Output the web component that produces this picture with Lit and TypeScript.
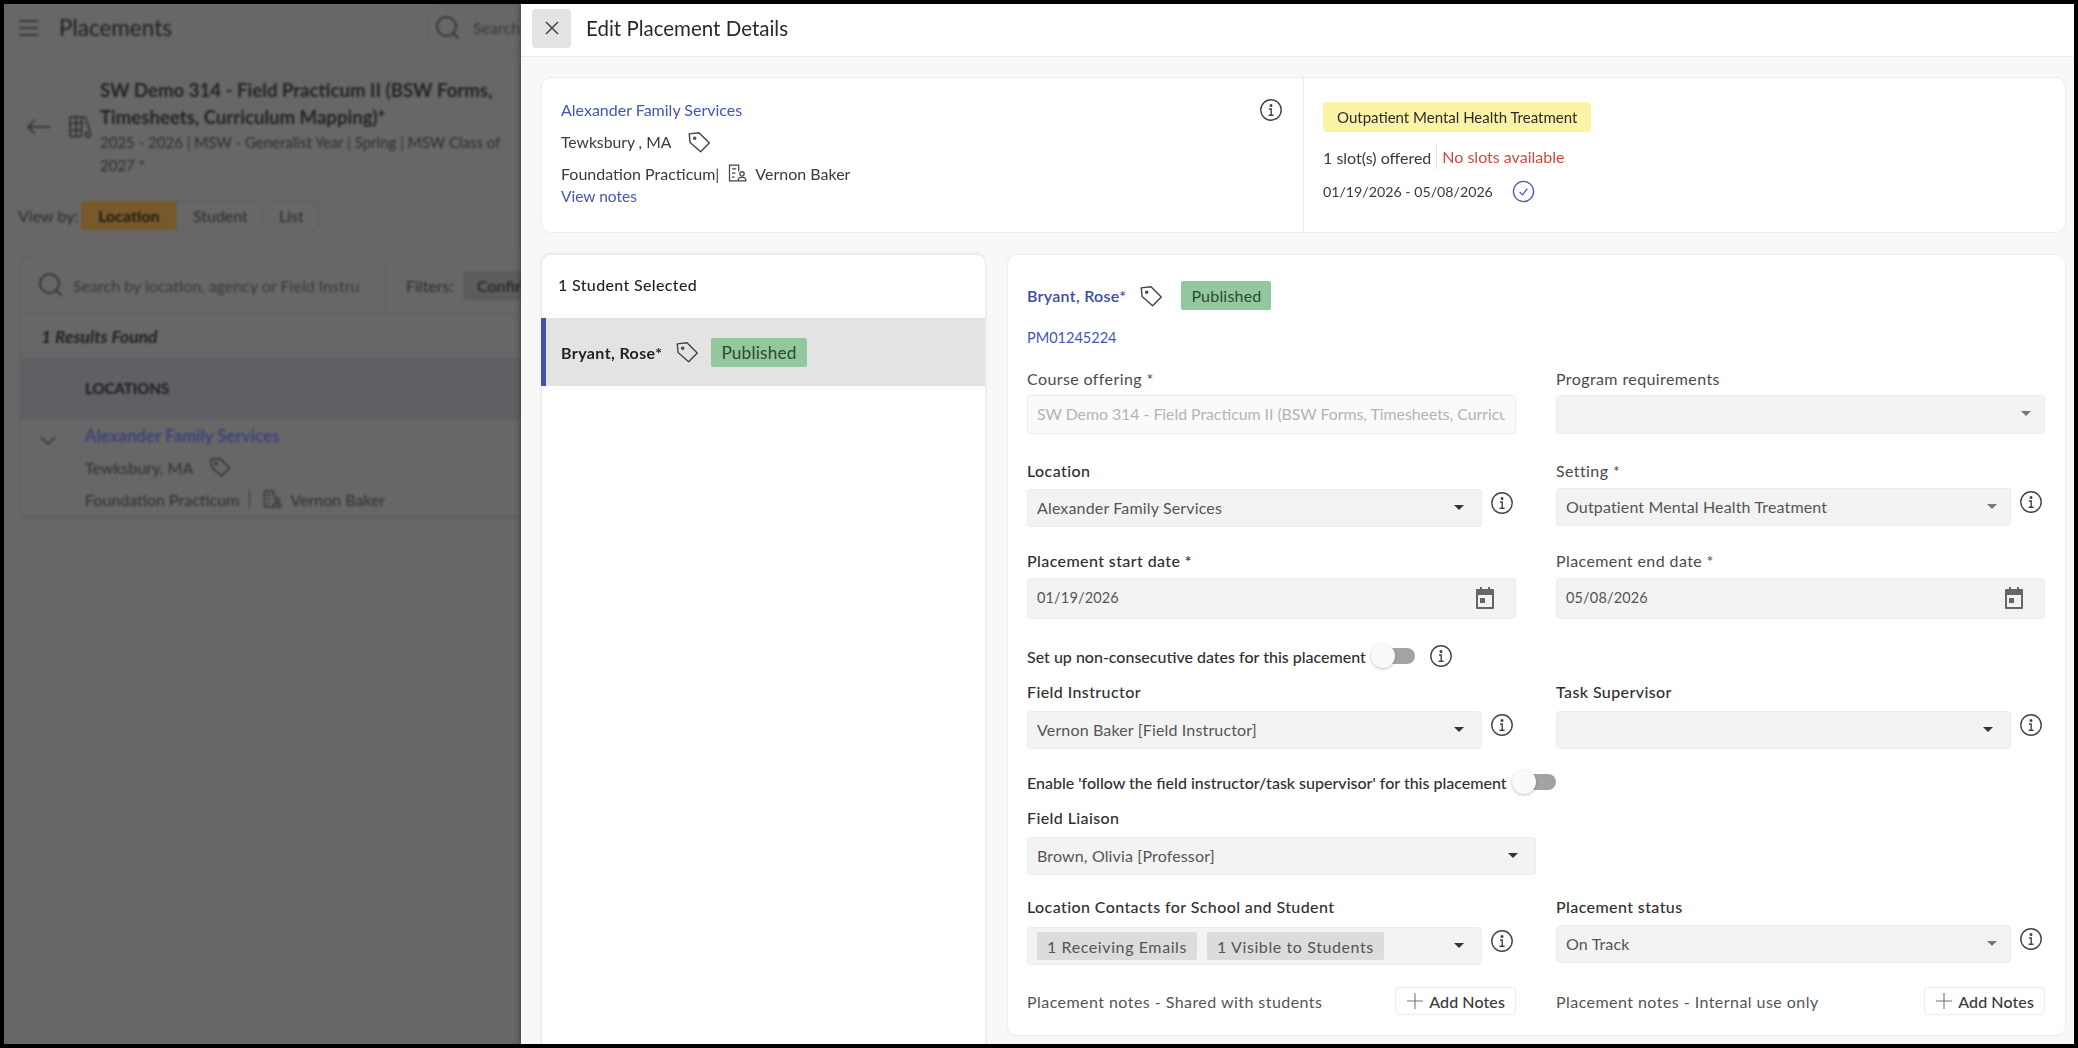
import { LitElement, html, css } from 'lit'
import { customElement } from 'lit/decorators.js'

const tagIcon = (size = 26, color = '#444') => html`
  <svg class="ico" width=${size} height=${size} viewBox="0 0 24 24" fill="none" stroke=${color} stroke-width="1.3" stroke-linejoin="round">
    <path d="M3 4.5 12 3.5 21.5 13 13.5 21 3.8 12.5z" />
    <circle cx="8" cy="8.5" r="1" />
  </svg>
`

const infoIcon = (size = 24, color = '#444') => html`
  <svg class="ico" width=${size} height=${size} viewBox="0 0 24 24" fill="none" stroke=${color} stroke-width="1.4">
    <circle cx="12" cy="12" r="10.2" />
    <path d="M10 11h2.2v6M9.6 17.2h5" />
    <circle cx="12" cy="7.4" r=".8" fill=${color} />
  </svg>
`

const supervisorIcon = (color = '#444') => html`
  <svg class="ico" width="20" height="20" viewBox="0 0 24 24" fill="none" stroke=${color} stroke-width="1.5">
    <path d="M14 10V2.5H3v19h10M6 7h5M6 12h4M6 17h3" />
    <circle cx="18" cy="13" r="2.6" />
    <path d="M13.5 21.5v-1.8a3 3 0 0 1 3-2.4h3a3 3 0 0 1 3 2.4v1.8z" />
  </svg>
`

const bookIcon = () => html`
  <svg class="ico" width="24" height="24" viewBox="0 0 24 24" fill="none" stroke="#2e2e2e" stroke-width="1.5">
    <path d="M1.5 2h16M1.5 8h14M1.5 15h12M1.5 21.5h12M2 2v19.5M8 2v19.5M13.5 2v19.5M17 2l5 14" />
    <circle cx="20" cy="19.5" r="2.5" />
  </svg>
`

const searchIcon = () => html`
  <svg class="ico" width="26" height="26" viewBox="0 0 26 26" fill="none" stroke="#2c2c2c" stroke-width="1.6">
    <circle cx="11.5" cy="11.5" r="9.5" />
    <path d="m18.5 18.5 5 5" />
  </svg>
`

const calendarIcon = () => html`
  <svg class="ico" width="24" height="24" viewBox="0 0 24 24" fill="#666">
    <path d="M7 1h2v2h6V1h2v2h3a1 1 0 0 1 1 1v18a1 1 0 0 1-1 1H4a1 1 0 0 1-1-1V4a1 1 0 0 1 1-1h3zM5 9v12h14V9z" />
    <rect x="7" y="12" width="5" height="5" />
  </svg>
`

const plusIcon = () => html`
  <svg class="ico" width="16" height="16" viewBox="0 0 16 16" stroke="#777" stroke-width="1.1">
    <path d="M8 0v16M0 8h16" />
  </svg>
`

const arrow = (cls = '') => html`<span class="arrow ${cls}"></span>`

const toggle = () => html`<span class="toggle"><span class="knob"></span></span>`

@customElement('app-root')
export class AppRoot extends LitElement {
  static styles = css`
    :host {
      display: block;
      width: 2078px;
      height: 1048px;
      padding: 4px;
      box-sizing: border-box;
      background: #000;
      font-family: Lato, "Noto Sans", sans-serif;
      font-size: 16px;
      color: #333;
    }

    * {
      box-sizing: border-box;
    }

    .ico {
      display: block;
      flex: none;
    }

    .screen {
      position: relative;
      height: 1040px;
      overflow: hidden;
      background: #676767;
    }

    /* page behind the drawer */
    .page {
      height: 100%;
      filter: blur(0.8px);
      color: #2c2c2c;
    }

    .topbar {
      display: flex;
      align-items: center;
      height: 53px;
      padding: 0 0 5px 15px;
      border-bottom: 1px solid #5f5f5f;
    }

    .burger {
      width: 19px;
      height: 16px;
      border-top: 2px solid #3a3a3a;
      border-bottom: 2px solid #3a3a3a;
      margin-right: 21px;
    }

    .burger::after {
      content: "";
      display: block;
      margin-top: 5px;
      height: 2px;
      background: #3a3a3a;
    }

    .page-title {
      width: 368px;
      font-size: 22.5px;
      color: #1f1f1f;
    }

    .top-search {
      display: flex;
      align-items: center;
      gap: 12px;
      width: 240px;
      height: 46px;
      padding-left: 7px;
      border: 1px solid #5f5f5f;
      border-radius: 12px;
      color: #3a3a3a;
    }

    .course {
      display: flex;
      align-items: center;
      margin-top: 20px;
      padding-left: 23px;
    }

    .back {
      margin-right: 18px;
    }

    .course-text {
      margin-left: 8px;
    }

    .course-title {
      font-size: 18.6px;
      line-height: 27px;
      font-weight: 700;
      color: #232323;
      white-space: nowrap;
    }

    .course-sub {
      font-size: 15px;
      line-height: 23px;
      color: #2e2e2e;
      white-space: nowrap;
    }

    .view-by {
      display: flex;
      align-items: center;
      margin-top: 24px;
      padding-left: 14px;
      gap: 2px;
    }

    .seg {
      display: flex;
      height: 29px;
      margin-left: 1px;
      border: 1px solid #606060;
      border-radius: 3px;
    }

    .seg span {
      display: flex;
      align-items: center;
      justify-content: center;
      width: 87px;
      border-left: 1px solid #606060;
    }

    .seg .on {
      width: 95px;
      margin: -1px 0 -1px -1px;
      background: #78592b;
      border: 0;
      border-radius: 3px;
      font-weight: 700;
      color: #1e1a10;
    }

    .seg .last {
      width: 55px;
    }

    .table {
      margin: 26px 0 0 16px;
      border: 1px solid #5f5f5f;
      border-radius: 10px 0 0 0;
    }

    .tools {
      display: flex;
      align-items: center;
      height: 57px;
      border-bottom: 1px solid #5f5f5f;
    }

    .tool-search {
      display: flex;
      align-items: center;
      gap: 9px;
      width: 365px;
      height: 100%;
      padding-left: 17px;
      border-right: 1px solid #5f5f5f;
      color: #383838;
    }

    .tool-search span {
      width: 286px;
      overflow: hidden;
      white-space: nowrap;
    }

    .filter-label {
      margin-left: 20px;
      width: 57px;
    }

    .filter-chip {
      display: flex;
      align-items: center;
      height: 29px;
      width: 120px;
      padding-left: 14px;
      background: #5c5c5c;
      border-radius: 4px;
      font-weight: 700;
    }

    .results {
      display: flex;
      align-items: center;
      height: 44px;
      padding-left: 20px;
      font-size: 17.5px;
      font-style: italic;
      font-weight: 700;
      color: #1f1f1f;
    }

    .thead {
      display: flex;
      align-items: center;
      height: 60px;
      padding-left: 64px;
      background: #5f5f64;
      font-size: 15px;
      font-weight: 700;
      color: #1d1d1d;
    }

    .trow {
      display: flex;
      height: 99px;
      border-top: 1px solid #5f5f5f;
      border-bottom: 1px solid #5f5f5f;
    }

    .chev {
      margin: 17px 0 0 19px;
    }

    .trow-text {
      margin-left: 29px;
      padding-top: 5px;
    }

    .trow-line {
      display: flex;
      align-items: center;
      height: 22px;
      gap: 8px;
      margin-bottom: 10px;
      color: #303030;
    }

    .trow-tag {
      gap: 15px;
    }

    .dark-link {
      font-size: 17px;
      color: #353f80;
      font-weight: 600;
    }

    .bar {
      width: 1px;
      height: 18px;
      background: #383838;
      margin: 0 4px 0 2px;
    }

    /* drawer */
    .sheet {
      position: absolute;
      top: 0;
      left: 517px;
      right: 0;
      bottom: 0;
      background: #f8f8f8;
      box-shadow: -2px 0 4px rgba(0, 0, 0, 0.25);
      filter: blur(0.4px);
    }

    .sheet-head {
      display: flex;
      align-items: center;
      height: 53px;
      padding: 0 0 4px 11px;
      background: #fff;
      border-bottom: 1px solid #ececec;
    }

    .close {
      display: flex;
      align-items: center;
      justify-content: center;
      width: 39px;
      height: 39px;
      background: #e3e3e3;
      border-radius: 4px;
    }

    .sheet-title {
      margin-left: 15px;
      font-size: 20.5px;
      color: #2a2a2a;
    }

    .sheet-body {
      padding: 20px 8px 0 20px;
    }

    .card {
      background: #fff;
      border: 1px solid #ececec;
      border-radius: 10px;
    }

    .place {
      display: flex;
      height: 156px;
    }

    .place-left {
      width: 762px;
      padding: 22px 20px 0 19px;
      border-right: 1px solid #ececec;
    }

    .place-head {
      display: flex;
      justify-content: space-between;
      height: 20px;
    }

    .place-head .ico {
      margin-top: -2px;
    }

    .link {
      color: #4554b8;
    }

    .place-line {
      display: flex;
      align-items: center;
      height: 24px;
      color: #3a3a3a;
    }

    .tewks {
      margin: 10px 0 7px;
      gap: 15px;
      font-size: 15.7px;
    }

    .practicum {
      gap: 8px;
    }

    .notes-link {
      display: block;
      margin-top: 1px;
      font-size: 15.5px;
      line-height: 20px;
    }

    .place-right {
      padding: 24px 0 0 19px;
    }

    .yellow {
      display: inline-flex;
      align-items: center;
      height: 30px;
      padding: 0 14px;
      background: #fbf3a6;
      border-radius: 4px;
      font-size: 15px;
      color: #2c2c2c;
    }

    .slots {
      display: flex;
      align-items: center;
      height: 24px;
      margin-top: 13px;
      color: #3a3a3a;
    }

    .slots .none {
      margin-left: 5px;
      padding-left: 5px;
      line-height: 24px;
      border-left: 1px solid #e3e3e3;
      color: #d0493f;
    }

    .dates {
      display: flex;
      align-items: center;
      gap: 19px;
      height: 24px;
      margin-top: 10px;
      font-size: 14.2px;
      color: #3a3a3a;
    }

    .lower {
      display: flex;
      gap: 21px;
      margin-top: 21px;
    }

    .students {
      width: 445px;
      height: 800px;
      box-shadow: 0 -1px 3px rgba(0, 0, 0, 0.08);
    }

    .students-head {
      display: flex;
      align-items: center;
      height: 63px;
      padding: 0 0 4px 16px;
      letter-spacing: 0.35px;
      color: #1f1f1f;
      font-weight: 500;
    }

    .student {
      display: flex;
      align-items: center;
      height: 68px;
      padding-left: 15px;
      margin-left: -1px;
      background: #e3e3e3;
      border-left: 5px solid #4451ac;
      font-weight: 700;
      letter-spacing: 0.4px;
      color: #222;
    }

    .student .ico {
      margin: 0 11px 0 12px;
    }

    .green {
      display: flex;
      align-items: center;
      height: 29px;
      padding: 0 10px;
      background: #93c89c;
      border-radius: 2px;
      font-weight: 400;
      color: #2b4a31;
    }

    .student .green {
      font-size: 17.2px;
      letter-spacing: 0.2px;
    }

    .detail {
      width: 1059px;
      height: 782px;
      padding: 26px 18px 0 19px;
    }

    .who {
      display: flex;
      align-items: center;
      height: 29px;
    }

    .who .link {
      font-weight: 600;
      letter-spacing: 0.3px;
      color: #3e4aa8;
    }

    .who .ico {
      margin: 0 17px 0 12px;
    }

    .who .green {
      letter-spacing: 0.2px;
    }

    .pm {
      margin-top: 18px;
      font-size: 14.5px;
      line-height: 20px;
    }

    .row {
      display: grid;
      grid-template-columns: 489px 489px;
      column-gap: 40px;
    }

    .row-course {
      margin-top: 23px;
    }

    .row-location {
      margin-top: 29px;
    }

    .row-dates {
      margin-top: 26px;
    }

    .row-people {
      margin-top: 16px;
    }

    .row-contacts {
      margin-top: 24px;
    }

    .row-notes {
      margin-top: 22px;
    }

    label {
      display: block;
      margin-top: -2px;
      padding-bottom: 2px;
      line-height: 20px;
      letter-spacing: 0.4px;
      color: #2f2f2f;
      font-weight: 500;
    }

    .soft {
      color: #4a4a4a;
      font-weight: 400;
    }

    .control {
      display: flex;
      align-items: center;
      justify-content: space-between;
      height: 38px;
      padding: 0 0 2px 9px;
      background: #f3f3f3;
      border: 1px solid #ececec;
      border-radius: 4px;
      letter-spacing: 0.15px;
      color: #555;
    }

    .gap-4 {
      margin-top: 4px;
    }

    .gap-5 {
      margin-top: 5px;
    }

    .gap-6 {
      margin-top: 6px;
    }

    .gap-7 {
      margin-top: 7px;
    }

    .gap-8 {
      margin-top: 8px;
    }

    .tall {
      height: 41px;
      font-size: 14.5px;
    }

    .course-input {
      height: 39px;
      background: #fafafa;
      color: #b4b4b4;
      font-size: 15.8px;
      letter-spacing: 0;
      overflow: hidden;
      white-space: nowrap;
    }

    .course-input span {
      width: 468px;
      overflow: hidden;
    }

    .program {
      height: 39px;
    }

    .with-info {
      display: flex;
      gap: 8px;
      padding-right: 2px;
    }

    .with-info .control {
      flex: 1;
    }

    .with-info > .ico {
      margin-top: 2px;
    }

    .arrow {
      width: 0;
      height: 0;
      flex: none;
      margin-right: 17px;
      border-left: 5px solid transparent;
      border-right: 5px solid transparent;
      border-top: 5px solid #333;
    }

    .arrow.grey {
      border-top-color: #777;
      margin-right: 13px;
    }

    .date .ico {
      margin-right: 18px;
    }

    .switch-row {
      display: flex;
      align-items: center;
      height: 24px;
      color: #2f2f2f;
      font-weight: 500;
    }

    .switch-dates {
      margin-top: 25px;
    }

    .switch-follow {
      margin-top: 21px;
    }

    .toggle {
      position: relative;
      display: block;
      width: 44px;
      height: 16px;
      margin-left: 5px;
      padding-left: 12px;
    }

    .toggle::before {
      content: "";
      display: block;
      height: 16px;
      background: #a3a3a3;
      border-radius: 0 8px 8px 0;
    }

    .knob {
      position: absolute;
      left: 0;
      top: -4px;
      width: 24px;
      height: 24px;
      background: #fafafa;
      border-radius: 50%;
      box-shadow: 0 1px 3px rgba(0, 0, 0, 0.25);
    }

    .switch-row > .ico {
      margin-left: 14px;
    }

    .liaison {
      width: 509px;
      margin-top: 16px;
    }

    .chips {
      display: flex;
      gap: 10px;
      margin-top: 2px;
    }

    .chip {
      display: flex;
      align-items: center;
      height: 28px;
      padding: 0 10px;
      background: #dcdcdc;
      border-radius: 2px;
      letter-spacing: 0.6px;
      color: #555;
    }

    .notes {
      display: flex;
      align-items: center;
      justify-content: space-between;
      letter-spacing: 0.45px;
      color: #555;
    }

    .add {
      display: flex;
      align-items: center;
      gap: 6px;
      height: 28px;
      padding: 0 10px 0 11px;
      background: #fff;
      border: 1px solid #ececec;
      border-radius: 4px;
      letter-spacing: 0.1px;
      font-weight: 500;
      color: #3a3a3a;
    }
  `

  private renderPage() {
    return html`
      <div class="page">
        <div class="topbar">
          <div class="burger"></div>
          <div class="page-title">Placements</div>
          <div class="top-search">${searchIcon()}<span>Search</span></div>
        </div>
        <div class="course">
          <svg class="ico back" width="23" height="16" viewBox="0 0 23 16" fill="none" stroke="#2c2c2c" stroke-width="1.5">
            <path d="M23 8H1M8 1 1 8l7 7" />
          </svg>
          ${bookIcon()}
          <div class="course-text">
            <div class="course-title">
              SW Demo 314 - Field Practicum II (BSW Forms,<br />Timesheets, Curriculum Mapping)*
            </div>
            <div class="course-sub">
              2025 - 2026 | MSW - Generalist Year | Spring | MSW Class of<br />2027 *
            </div>
          </div>
        </div>
        <div class="view-by">
          View by:
          <div class="seg">
            <span class="on">Location</span>
            <span>Student</span>
            <span class="last">List</span>
          </div>
        </div>
        <div class="table">
          <div class="tools">
            <div class="tool-search">
              ${searchIcon()}<span>Search by location, agency or Field Instructor</span>
            </div>
            <div class="filter-label">Filters:</div>
            <div class="filter-chip">Confirmed</div>
          </div>
          <div class="results">1 Results Found</div>
          <div class="thead">LOCATIONS</div>
          <div class="trow">
            <svg class="ico chev" width="16" height="10" viewBox="0 0 16 10" fill="none" stroke="#2c2c2c" stroke-width="1.4">
              <path d="m1 1 7 7 7-7" />
            </svg>
            <div class="trow-text">
              <div class="trow-line dark-link">Alexander Family Services</div>
              <div class="trow-line trow-tag">Tewksbury, MA ${tagIcon(24, '#2c2c2c')}</div>
              <div class="trow-line">
                Foundation Practicum <span class="bar"></span>${supervisorIcon('#2c2c2c')} Vernon Baker
              </div>
            </div>
          </div>
        </div>
      </div>
    `
  }

  private renderPlacementCard() {
    return html`
      <div class="card place">
        <div class="place-left">
          <div class="place-head">
            <span class="link">Alexander Family Services</span>
            ${infoIcon()}
          </div>
          <div class="place-line tewks">Tewksbury , MA ${tagIcon()}</div>
          <div class="place-line practicum">Foundation Practicum| ${supervisorIcon()} Vernon Baker</div>
          <span class="link notes-link">View notes</span>
        </div>
        <div class="place-right">
          <div class="yellow">Outpatient Mental Health Treatment</div>
          <div class="slots">1 slot(s) offered<span class="none">No slots available</span></div>
          <div class="dates">
            01/19/2026 - 05/08/2026
            <svg class="ico" width="23" height="23" viewBox="0 0 24 24" fill="none" stroke="#4a5ac0" stroke-width="1.4">
              <circle cx="12" cy="12" r="10.5" />
              <path d="m8 12.5 3 3 5-6.5" />
            </svg>
          </div>
        </div>
      </div>
    `
  }

  private renderForm() {
    return html`
      <div class="card detail">
        <div class="who">
          <span class="link">Bryant, Rose*</span>
          ${tagIcon()}
          <span class="green">Published</span>
        </div>
        <div class="link pm">PM01245224</div>

        <div class="row row-course">
          <div>
            <label class="soft">Course offering *</label>
            <div class="control course-input gap-4">
              <span>SW Demo 314 - Field Practicum II (BSW Forms, Timesheets, Curriculum Mapping)</span>
            </div>
          </div>
          <div>
            <label class="soft">Program requirements</label>
            <div class="control program gap-4"><span></span>${arrow('grey')}</div>
          </div>
        </div>

        <div class="row row-location">
          <div>
            <label>Location</label>
            <div class="with-info gap-6">
              <div class="control"><span>Alexander Family Services</span>${arrow()}</div>
              ${infoIcon()}
            </div>
          </div>
          <div>
            <label class="soft">Setting *</label>
            <div class="with-info gap-5">
              <div class="control"><span>Outpatient Mental Health Treatment</span>${arrow('grey')}</div>
              ${infoIcon()}
            </div>
          </div>
        </div>

        <div class="row row-dates">
          <div>
            <label>Placement start date *</label>
            <div class="control date tall gap-5"><span>01/19/2026</span>${calendarIcon()}</div>
          </div>
          <div>
            <label class="soft">Placement end date *</label>
            <div class="control date tall gap-5"><span>05/08/2026</span>${calendarIcon()}</div>
          </div>
        </div>

        <div class="switch-row switch-dates">
          Set up non-consecutive dates for this placement ${toggle()} ${infoIcon()}
        </div>

        <div class="row row-people">
          <div>
            <label>Field Instructor</label>
            <div class="with-info gap-7">
              <div class="control"><span>Vernon Baker [Field Instructor]</span>${arrow()}</div>
              ${infoIcon()}
            </div>
          </div>
          <div>
            <label>Task Supervisor</label>
            <div class="with-info gap-7">
              <div class="control"><span></span>${arrow()}</div>
              ${infoIcon()}
            </div>
          </div>
        </div>

        <div class="switch-row switch-follow">
          Enable 'follow the field instructor/task supervisor' for this placement ${toggle()}
        </div>

        <div class="liaison">
          <label>Field Liaison</label>
          <div class="control gap-7"><span>Brown, Olivia [Professor]</span>${arrow()}</div>
        </div>

        <div class="row row-contacts">
          <div>
            <label>Location Contacts for School and Student</label>
            <div class="with-info gap-8">
              <div class="control">
                <div class="chips">
                  <span class="chip">1 Receiving Emails</span>
                  <span class="chip">1 Visible to Students</span>
                </div>
                ${arrow()}
              </div>
              ${infoIcon()}
            </div>
          </div>
          <div>
            <label>Placement status</label>
            <div class="with-info gap-6">
              <div class="control"><span>On Track</span>${arrow('grey')}</div>
              ${infoIcon()}
            </div>
          </div>
        </div>

        <div class="row row-notes">
          <div class="notes">
            <span>Placement notes - Shared with students</span>
            <div class="add">${plusIcon()} Add Notes</div>
          </div>
          <div class="notes">
            <span>Placement notes - Internal use only</span>
            <div class="add">${plusIcon()} Add Notes</div>
          </div>
        </div>
      </div>
    `
  }

  render() {
    return html`
      <div class="screen">
        ${this.renderPage()}
        <div class="sheet">
          <div class="sheet-head">
            <div class="close">
              <svg width="16" height="16" viewBox="0 0 16 16" stroke="#444" stroke-width="1.5">
                <path d="m2 2 12 12M14 2 2 14" />
              </svg>
            </div>
            <div class="sheet-title">Edit Placement Details</div>
          </div>
          <div class="sheet-body">
            ${this.renderPlacementCard()}
            <div class="lower">
              <div class="card students">
                <div class="students-head">1 Student Selected</div>
                <div class="student">
                  Bryant, Rose*
                  ${tagIcon()}
                  <span class="green">Published</span>
                </div>
              </div>
              ${this.renderForm()}
            </div>
          </div>
        </div>
      </div>
    `
  }
}

declare global {
  interface HTMLElementTagNameMap {
    'app-root': AppRoot
  }
}
